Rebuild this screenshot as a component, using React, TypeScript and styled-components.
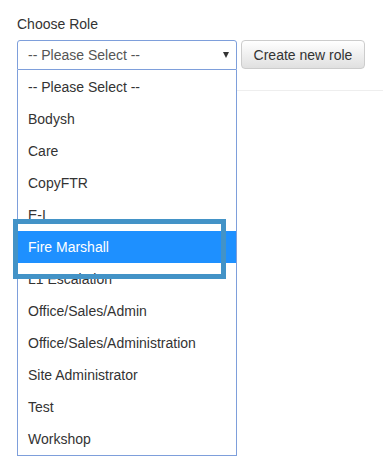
import styled, { createGlobalStyle } from "styled-components";

const GlobalStyle = createGlobalStyle`
    body {
        margin: 0;
        background: #ffffff;
        font-family: "Liberation Sans", Arial, sans-serif;
        font-size: 14px;
        color: #333333;
    }
`;

const roles = [
    "-- Please Select --",
    "Bodysh",
    "Care",
    "CopyFTR",
    "E-I",
    "Fire Marshall",
    "L1 Escalation",
    "Office/Sales/Admin",
    "Office/Sales/Administration",
    "Site Administrator",
    "Test",
    "Workshop",
];

const StyledPage = styled.div`
    box-sizing: border-box;
    min-height: 473px;
    padding: 14px 0 0 17px;
`;
const StyledLabel = styled.div`
    line-height: 20px;
    margin-bottom: 6px;
    color: #333333;
`;
const StyledRow = styled.div`
    display: flex;
    align-items: flex-start;
    gap: 4px;
`;
const StyledSelectWrap = styled.div`
    position: relative;
    width: 220px;
    z-index: 2;
`;
const StyledSelectBox = styled.div`
    box-sizing: border-box;
    height: 30px;
    border: 1px solid #7e9fdb;
    border-radius: 3px 3px 0 0;
    padding: 0 7px 0 10px;
    display: flex;
    align-items: center;
    justify-content: space-between;
    color: #555555;
`;
const StyledArrow = styled.span`
    width: 0;
    height: 0;
    border-left: 3.5px solid transparent;
    border-right: 3.5px solid transparent;
    border-top: 6px solid #333333;
`;
const StyledButton = styled.div`
    box-sizing: border-box;
    width: 124px;
    height: 29px;
    border: 1px solid #cccccc;
    border-radius: 4px;
    background: linear-gradient(to bottom, #ffffff 0%, #e0e0e0 100%);
    display: flex;
    align-items: center;
    justify-content: center;
    color: #333333;
`;
const StyledDivider = styled.div`
    margin-top: 20px;
    border-top: 1px solid #eeeeee;
`;
const StyledList = styled.div`
    position: absolute;
    top: 100%;
    left: 0;
    width: 220px;
    box-sizing: border-box;
    padding-top: 1px;
    border: 1px solid #7e9fdb;
    border-top: none;
    background: #ffffff;
`;
const StyledOption = styled.div<{ $active?: boolean }>`
    height: 32px;
    line-height: 32px;
    padding-left: 10px;
    white-space: nowrap;
    color: ${(p) => (p.$active ? "#ffffff" : "#333333")};
    background: ${(p) => (p.$active ? "#1e90ff" : "transparent")};
`;
const StyledMarker = styled.div`
    position: absolute;
    left: -4px;
    top: 179px;
    width: 213px;
    height: 60px;
    box-sizing: border-box;
    border: 5px solid #4393c7;
`;

export default function App() {
    return (
        <>
            <GlobalStyle />
            <StyledPage>
                <StyledLabel>Choose Role</StyledLabel>
                <StyledRow>
                    <StyledSelectWrap>
                        <StyledSelectBox>
                            <span>-- Please Select --</span>
                            <StyledArrow />
                        </StyledSelectBox>
                        <StyledList>
                            {roles.map((r) => (
                                <StyledOption key={r} $active={r === "Fire Marshall"}>
                                    {r}
                                </StyledOption>
                            ))}
                        </StyledList>
                        <StyledMarker />
                    </StyledSelectWrap>
                    <StyledButton>Create new role</StyledButton>
                </StyledRow>
                <StyledDivider />
            </StyledPage>
        </>
    );
}
